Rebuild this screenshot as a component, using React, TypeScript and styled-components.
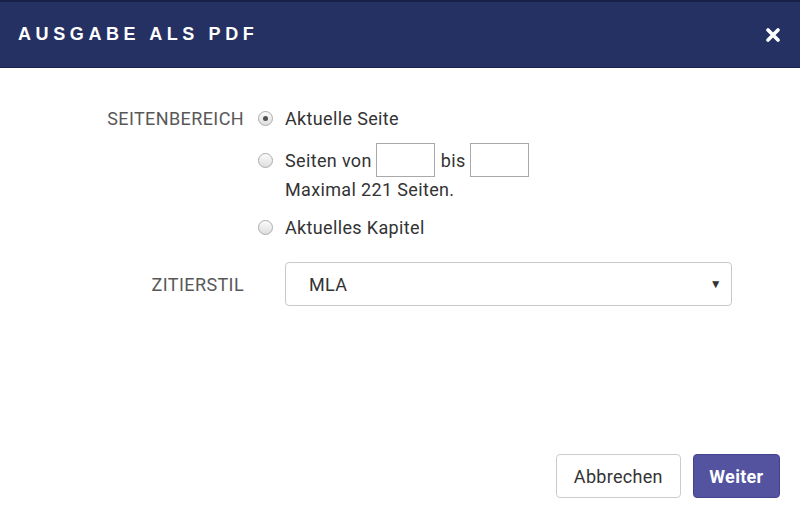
import React from "react";
import styled, { createGlobalStyle } from "styled-components";

const Global = createGlobalStyle`
  html, body { margin: 0; padding: 0; background: #ffffff; }
  body { font-family: Roboto, "Liberation Sans", Arial, sans-serif; }
  * { box-sizing: border-box; }
`;

const Dialog = styled.div`
  width: 800px;
  height: 507px;
  display: flex;
  flex-direction: column;
  background: #ffffff;
`;

const Header = styled.header`
  height: 68px;
  flex: none;
  display: flex;
  align-items: center;
  justify-content: space-between;
  padding: 0 20px 0 18px;
  background: #253063;
  border-top: 2px solid #18204a;
  border-bottom: 1px solid #1a2250;
`;

const Title = styled.h1`
  margin: 0;
  font-family: "Liberation Sans", Arial, sans-serif;
  font-weight: 700;
  font-size: 18px;
  letter-spacing: 4.6px;
  color: #ffffff;
`;

const Close = styled.button`
  border: 0;
  padding: 0;
  background: transparent;
  display: flex;
  align-items: center;
  justify-content: center;
  width: 14px;
  height: 14px;
  cursor: pointer;
`;

const Body = styled.main`
  flex: 1;
  padding-top: 35px;
`;

const Form = styled.div`
  display: grid;
  grid-template-columns: 244px 446px;
  column-gap: 14px;
  row-gap: 20px;
  align-items: start;
`;

const Label = styled.div<{ $h: number }>`
  height: ${(p) => p.$h}px;
  display: flex;
  align-items: center;
  justify-content: flex-end;
  font-size: 18px;
  letter-spacing: 0.4px;
  color: #585858;
  text-transform: uppercase;
`;

const Options = styled.div`
  display: flex;
  flex-direction: column;
`;

const Option = styled.label<{ $h: number; $mt?: number }>`
  height: ${(p) => p.$h}px;
  margin-top: ${(p) => p.$mt ?? 0}px;
  display: flex;
  align-items: center;
  font-size: 18px;
  letter-spacing: 0.35px;
  color: #333333;
  white-space: nowrap;
`;

const Radio = styled.span<{ $checked?: boolean }>`
  width: 15px;
  height: 15px;
  flex: none;
  margin-right: 12px;
  border-radius: 50%;
  border: 1px solid #ababab;
  background: linear-gradient(#fbfbfb, #dedede);
  display: flex;
  align-items: center;
  justify-content: center;
  &::after {
    content: "";
    width: 5px;
    height: 5px;
    border-radius: 50%;
    background: ${(p) => (p.$checked ? "#505050" : "transparent")};
  }
`;

const NumInput = styled.span`
  width: 59px;
  height: 34px;
  flex: none;
  border: 1px solid #a9a9a9;
  background: #ffffff;
  margin: 0 6px 0 4px;
`;

const Hint = styled.div`
  height: 20px;
  margin-top: 2px;
  padding-left: 27px;
  display: flex;
  align-items: center;
  font-size: 18px;
  letter-spacing: 0.35px;
  color: #333333;
`;

const Select = styled.div`
  margin-left: 27px;
  width: 447px;
  height: 44px;
  border: 1px solid #c9c9c9;
  border-radius: 4px;
  display: flex;
  align-items: center;
  justify-content: space-between;
  padding: 0 9px 0 23px;
  font-size: 18px;
  letter-spacing: 0.35px;
  color: #333333;
`;

const Arrow = styled.span`
  font-size: 12px;
  color: #333333;
`;

const Footer = styled.footer`
  display: flex;
  justify-content: flex-end;
  gap: 12px;
  padding: 0 20px 9px 0;
`;

const Button = styled.button<{ $primary?: boolean }>`
  height: 44px;
  padding: 0 ${(p) => (p.$primary ? 15.5 : 17)}px;
  border-radius: 4px;
  font-family: Roboto, "Liberation Sans", Arial, sans-serif;
  font-size: 18px;
  letter-spacing: 0.3px;
  font-weight: ${(p) => (p.$primary ? 700 : 400)};
  color: ${(p) => (p.$primary ? "#ffffff" : "#333333")};
  background: ${(p) => (p.$primary ? "#5453a0" : "#ffffff")};
  border: 1px solid ${(p) => (p.$primary ? "#44448d" : "#cccccc")};
`;

function CloseIcon() {
  return (
    <svg width="14" height="14" viewBox="0 0 14 14">
      <path d="M2 2 L12 12 M12 2 L2 12" stroke="#fff" strokeWidth="3.6" strokeLinecap="round" />
    </svg>
  );
}

export default function App() {
  return (
    <>
      <Global />
      <Dialog>
        <Header>
          <Title>AUSGABE ALS PDF</Title>
          <Close aria-label="Schließen">
            <CloseIcon />
          </Close>
        </Header>
        <Body>
          <Form>
            <Label $h={30}>Seitenbereich</Label>
            <Options>
              <Option $h={30}>
                <Radio $checked />
                Aktuelle Seite
              </Option>
              <Option $h={34} $mt={10}>
                <Radio />
                Seiten von
                <NumInput />
                bis
                <NumInput />
              </Option>
              <Hint>Maximal 221 Seiten.</Hint>
              <Option $h={30} $mt={13}>
                <Radio />
                Aktuelles Kapitel
              </Option>
            </Options>
            <Label $h={44}>Zitierstil</Label>
            <Select>
              MLA
              <Arrow>▼</Arrow>
            </Select>
          </Form>
        </Body>
        <Footer>
          <Button>Abbrechen</Button>
          <Button $primary>Weiter</Button>
        </Footer>
      </Dialog>
    </>
  );
}
